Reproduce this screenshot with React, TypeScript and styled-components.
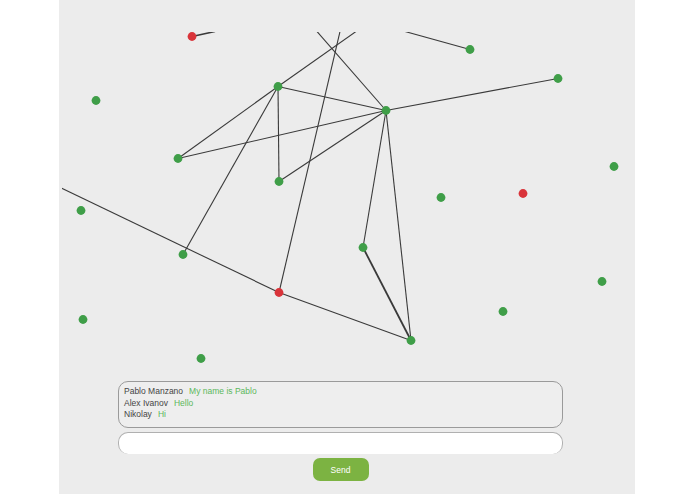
import React from "react";
import styled, { createGlobalStyle } from "styled-components";

const GlobalStyle = createGlobalStyle`
  html, body {
    margin: 0;
    padding: 0;
    background: #ffffff;
  }
  body {
    font-family: "Liberation Sans", Arial, sans-serif;
  }
`;

const Page = styled.div`
  width: 576px;
  height: 494px;
  margin: 0 0 0 59px;
  background: #ececec;
  display: flex;
  flex-direction: column;
  padding-top: 32px;
  box-sizing: border-box;
  overflow: hidden;
`;

const Canvas = styled.svg`
  display: block;
  margin-left: 3px;
  flex: none;
`;

const Chat = styled.div`
  width: 445px;
  margin: 9px 0 0 59px;
  display: flex;
  flex-direction: column;
`;

const Messages = styled.div`
  height: 47px;
  box-sizing: border-box;
  border: 1px solid #9a9a9a;
  border-radius: 10px;
  padding: 4px 5px;
  background: #eeeeee;
`;

const Message = styled.div`
  font-size: 8.5px;
  line-height: 11.6px;
  color: #444444;
  white-space: nowrap;
`;

const Text = styled.span`
  color: #5cb85c;
  margin-left: 6px;
`;

const Input = styled.input`
  margin-top: 4px;
  height: 22px;
  box-sizing: border-box;
  border: 1px solid #b0b0b0;
  border-bottom: none;
  border-radius: 10px;
  background: #ffffff;
  outline: none;
`;

const Send = styled.button`
  align-self: center;
  margin-top: 4px;
  width: 56px;
  height: 23px;
  border: none;
  border-radius: 7px;
  background: #7cb342;
  color: #ffffff;
  font-family: "Liberation Sans", Arial, sans-serif;
  font-size: 8.5px;
  cursor: pointer;
`;

type Node = { x: number; y: number; red?: boolean };

const nodes: Node[] = [
  { x: 192, y: 36, red: true },
  { x: 470, y: 49 },
  { x: 558, y: 78 },
  { x: 96, y: 100 },
  { x: 278, y: 86 },
  { x: 386, y: 110 },
  { x: 178, y: 158 },
  { x: 614, y: 166 },
  { x: 279, y: 181 },
  { x: 441, y: 197 },
  { x: 523, y: 193, red: true },
  { x: 81, y: 210 },
  { x: 183, y: 254 },
  { x: 363, y: 247 },
  { x: 602, y: 281 },
  { x: 279, y: 292, red: true },
  { x: 503, y: 311 },
  { x: 83, y: 319 },
  { x: 411, y: 340 },
  { x: 201, y: 358 },
];

// [x1, y1, x2, y2, width]
const edges: [number, number, number, number, number][] = [
  [192, 36, 215, 31, 1.6],
  [470, 49, 405, 31, 1.1],
  [278, 86, 356, 31, 1.1],
  [386, 110, 317, 31, 1.1],
  [279, 292, 340, 31, 1.1],
  [278, 86, 386, 110, 1.1],
  [386, 110, 558, 78, 1.1],
  [278, 86, 178, 158, 1.1],
  [278, 86, 279, 181, 1.1],
  [278, 86, 183, 254, 1.1],
  [386, 110, 178, 158, 1.1],
  [386, 110, 279, 181, 1.1],
  [386, 110, 363, 247, 1.1],
  [386, 110, 411, 340, 1.1],
  [363, 247, 411, 340, 1.8],
  [61, 187.5, 279, 292, 1.1],
  [279, 292, 411, 340, 1.1],
];

const messages = [
  { name: "Pablo Manzano", text: "My name is Pablo" },
  { name: "Alex Ivanov", text: "Hello" },
  { name: "Nikolay", text: "Hi" },
];

export default function App() {
  return (
    <>
      <GlobalStyle />
      <Page>
        <Canvas width={570} height={340} viewBox="62 31.5 570 340">
          {edges.map(([x1, y1, x2, y2, w], i) => (
            <line
              key={i}
              x1={x1}
              y1={y1}
              x2={x2}
              y2={y2}
              stroke="#3a3a3a"
              strokeWidth={w}
            />
          ))}
          {nodes.map((n, i) => (
            <circle
              key={i}
              cx={n.x}
              cy={n.y}
              r={4.4}
              fill={n.red ? "#d9343a" : "#3f9e48"}
            />
          ))}
        </Canvas>
        <Chat>
          <Messages>
            {messages.map((m) => (
              <Message key={m.name}>
                {m.name}
                <Text>{m.text}</Text>
              </Message>
            ))}
          </Messages>
          <Input />
          <Send>Send</Send>
        </Chat>
      </Page>
    </>
  );
}
